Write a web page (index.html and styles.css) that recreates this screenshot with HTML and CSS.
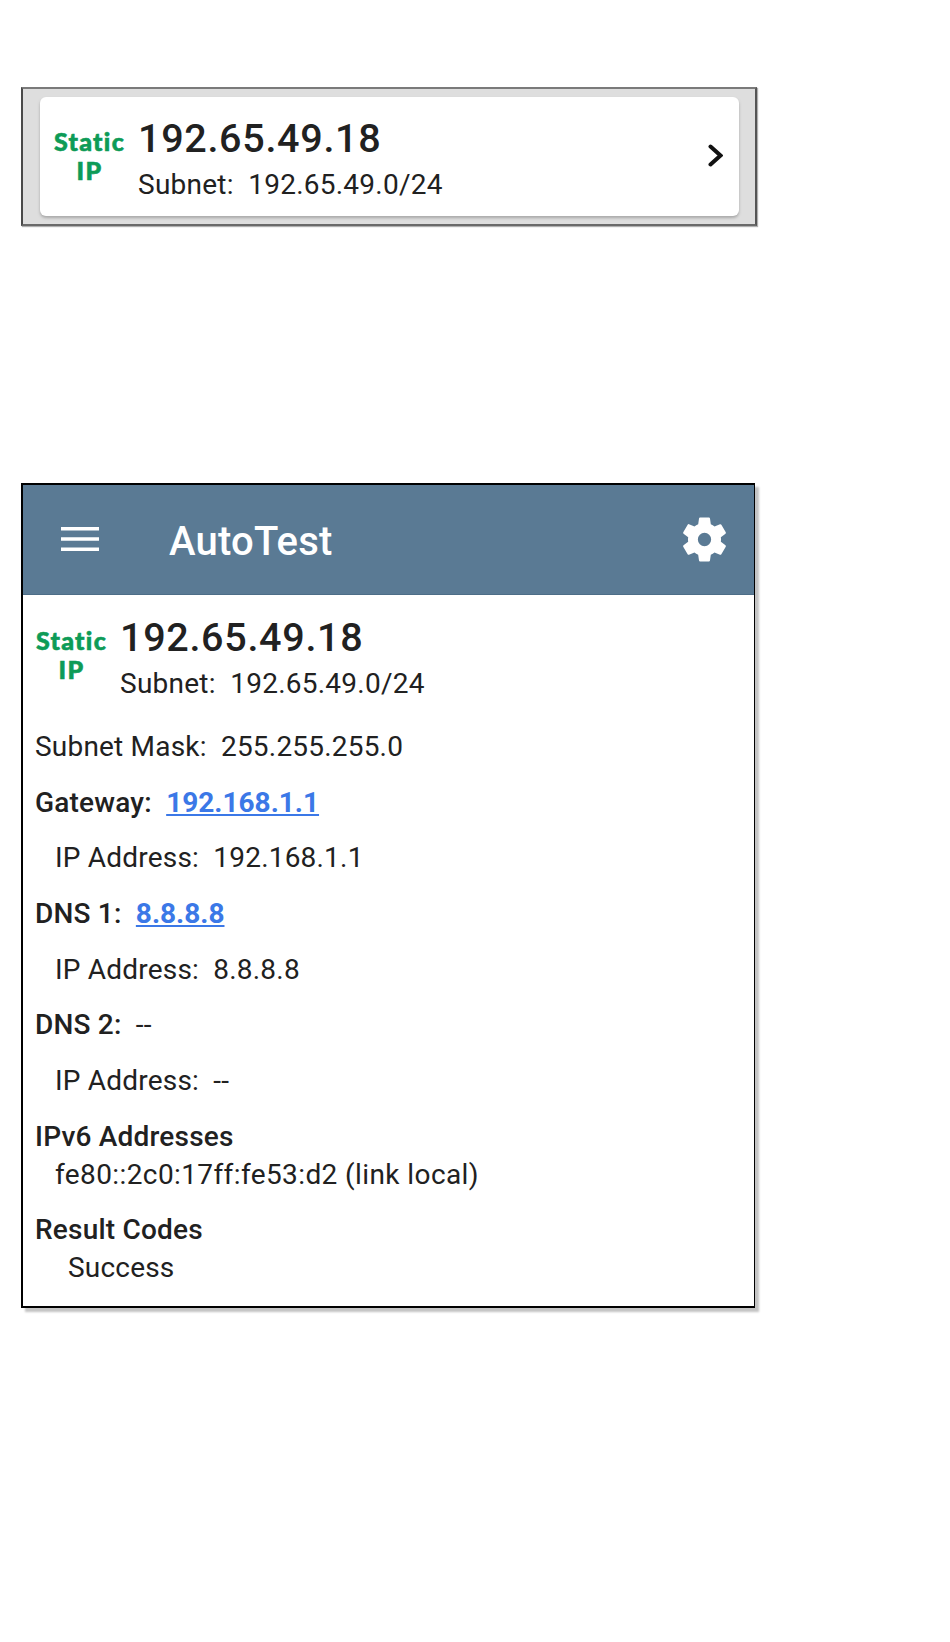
FILE: index.html
```html
<!DOCTYPE html>
<html lang="en">
<head>
<meta charset="utf-8">
<title>AutoTest</title>
<link rel="stylesheet" href="styles.css">
</head>
<body>
<main class="page">
  <section class="tile-frame">
    <div class="tile">
      <div class="ip-type"><span>Static</span><span>IP</span></div>
      <div class="ip-text">
        <div class="ip-main">192.65.49.18</div>
        <div class="ip-sub">Subnet:&nbsp; 192.65.49.0/24</div>
      </div>
      <svg class="chevron" viewBox="0 0 15 23" aria-hidden="true"><path d="M2.500 2.500 L12.500 11.500 L2.500 20.500" /></svg>
    </div>
  </section>
  <section class="screen">
    <header class="appbar">
      <svg class="menu" viewBox="0 0 38 24" aria-hidden="true"><path d="M0 0h38v3.400H0zM0 10.300h38v3.400H0zM0 20.600h38v3.400H0z"/></svg>
      <h1 class="title">AutoTest</h1>
      <svg class="gear" viewBox="0 0 24 24" aria-hidden="true"><path fill-rule="evenodd" d="M19.140 12.940c.04-.3.06-.61.06-.94 0-.32-.02-.64-.07-.94l2.030-1.580a.49.49 0 0 0 .12-.61l-1.920-3.320a.49.49 0 0 0-.59-.22l-2.390.96a7 7 0 0 0-1.620-.94l-.36-2.540a.48.48 0 0 0-.48-.41h-3.840a.47.47 0 0 0-.47.41l-.36 2.540c-.59.24-1.130.57-1.620.94l-2.390-.96a.48.48 0 0 0-.59.22L2.740 8.870a.47.47 0 0 0 .12.61l2.030 1.580c-.05.3-.09.63-.09.94s.02.64.07.94l-2.030 1.580a.49.49 0 0 0-.12.61l1.920 3.320c.12.22.37.29.59.22l2.390-.96c.5.38 1.030.7 1.620.94l.36 2.540c.05.24.24.41.48.41h3.840c.24 0 .44-.17.47-.41l.36-2.540c.59-.24 1.130-.56 1.620-.94l2.390.96c.22.08.47 0 .59-.22l1.920-3.320a.47.47 0 0 0-.12-.61zM12 14.900a2.900 2.900 0 1 1 0-5.800 2.900 2.900 0 0 1 0 5.800z"/></svg>
    </header>
    <div class="content">
      <div class="summary">
        <div class="ip-type"><span>Static</span><span>IP</span></div>
        <div class="ip-text">
          <div class="ip-main">192.65.49.18</div>
          <div class="ip-sub">Subnet:&nbsp; 192.65.49.0/24</div>
        </div>
      </div>
      <p class="row first">Subnet Mask:&nbsp; 255.255.255.0</p>
      <p class="row"><b>Gateway:</b>&nbsp; <a class="link" href="#">192.168.1.1</a></p>
      <p class="row indent">IP Address:&nbsp; 192.168.1.1</p>
      <p class="row"><b>DNS 1:</b>&nbsp; <a class="link" href="#">8.8.8.8</a></p>
      <p class="row indent">IP Address:&nbsp; 8.8.8.8</p>
      <p class="row"><b>DNS 2:</b>&nbsp; --</p>
      <p class="row indent">IP Address:&nbsp; --</p>
      <div class="group">
        <b class="line">IPv6 Addresses</b>
        <span class="line indent">fe80::2c0:17ff:fe53:d2 (link local)</span>
      </div>
      <div class="group">
        <b class="line">Result Codes</b>
        <span class="line indent-more">Success</span>
      </div>
    </div>
  </section>
</main>
</body>
</html>
```
FILE: styles.css
```css
* { box-sizing: border-box; }
html, body { margin: 0; background: #fff; }
body { font-family: Roboto, "Liberation Sans", sans-serif; color: #212121; }
.page { width: 950px; height: 1642px; padding: 87px 0 0 21px; display: flex; flex-direction: column; gap: 257px; }
.tile-frame { width: 736px; height: 139px; background: #dedede; border: 2px solid #6a6a6a; border-top-color: #7a7a7a; border-left-color: #4a4a4a; border-right-color: #555; padding: 8px 16px 8px 17px; box-shadow: 1px 1px 1px #b0b0b0; }
.tile { height: 100%; background: #fff; border-radius: 6px; box-shadow: 0 2px 3px #a8a8a8; display: flex; align-items: flex-start; padding: 19px 0 0 13px; }
.ip-type { display: flex; flex-direction: column; align-items: center; width: 73px; margin-right: 12px; margin-top: 11px; color: #0d9b57; font-family: Lato, "Open Sans", sans-serif; font-weight: 900; font-size: 25px; line-height: 29px; letter-spacing: 1.300px; -webkit-text-stroke: .6px #0d9b57; }
.ip-text { display: flex; flex-direction: column; }
.ip-main { font-size: 39.500px; font-weight: 500; line-height: 44px; letter-spacing: .7px; margin-top: 1px; }
.ip-sub { font-size: 28px; line-height: 32px; margin-top: 8px; letter-spacing: .25px; }
.chevron { width: 15px; height: 23px; margin-left: auto; margin-right: 16px; margin-top: 28px; fill: none; stroke: #111; stroke-width: 4; stroke-linecap: round; }
.screen { width: 734px; height: 825px; border: 2px solid #000; border-right-width: 1px; box-shadow: 4px 4px 2px #c4c4c4; display: flex; flex-direction: column; }
.appbar { height: 110px; background: #5a7a94; border-bottom: 1px solid #4d6d87; display: flex; align-items: center; padding: 0 22px 0 38px; flex: none; }
.menu { width: 38px; height: 24px; fill: #fff; margin-bottom: 1px; }
.title { margin: 4px 0 0 70px; color: #fff; font-size: 40px; font-weight: 500; letter-spacing: .2px; }
.gear { width: 55px; height: 55px; fill: #fff; margin-left: auto; margin-bottom: 1px; }
.content { padding: 0 12px; font-size: 28px; letter-spacing: .2px; flex: 1; }
.summary { display: flex; padding: 20px 0 0 0; }
.row { margin: 0; height: 55.700px; line-height: 55.700px; }
.row.first { margin-top: 19px; }
b { font-weight: 500; }
.indent { padding-left: 20px; }
.indent-more { padding-left: 33px; }
.group .indent { letter-spacing: .4px; }
.link { color: #3b78e7; font-weight: 700; letter-spacing: 0; }
.group { margin-top: 5px; padding-top: 4px; }
.group + .group { margin-top: 12px; padding-top: 5px; }
.line { display: block; line-height: 38px; }
```
